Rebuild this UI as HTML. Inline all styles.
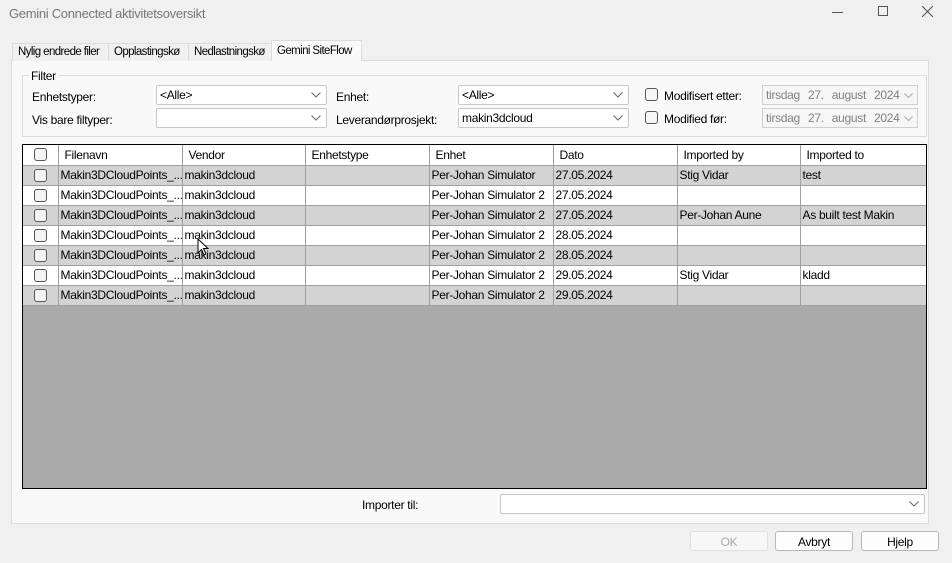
<!DOCTYPE html>
<html><head><meta charset="utf-8"><style>
*{box-sizing:border-box;margin:0;padding:0}
body{width:952px;height:563px;background:#f0f0f0;font-family:"Liberation Sans",sans-serif;font-size:12px;color:#000;position:relative;overflow:hidden;letter-spacing:-0.3px}
.a{position:absolute}
.t{white-space:nowrap}
.tab{position:absolute;top:43px;height:18px;border:1px solid #dcdcdc;border-bottom:none;background:#f0f0f0;padding:2px 0 0 5px;font-size:11.5px;letter-spacing:-0.6px;overflow:hidden}
.combo{position:absolute;height:20px;background:#fff;border:1px solid #c8c8c8;border-radius:2px;padding:2px 0 0 3px}
.combo svg{position:absolute;right:5px;top:6px}
.cb{position:absolute;width:13px;height:13px;border:1px solid #555;border-radius:3px;background:#f6f6f6}
.date{position:absolute;height:20px;border:1px solid #cfcfcf;background:#f6f6f6;color:#808080;padding:2px 0 0 3px;word-spacing:5px}
.date svg{position:absolute;right:4px;top:7px}
.btn{position:absolute;top:531px;height:20px;width:78px;border:1px solid #b8b8b8;border-radius:3px;background:#fdfdfd;text-align:center;padding-top:3px}
table{position:absolute;left:23px;top:145px;border-collapse:collapse;table-layout:fixed;width:903px}
td{height:20px;border:1px solid #a0a0a0;padding:0;text-indent:2px;white-space:nowrap;overflow:hidden;vertical-align:middle}
tr.g td{background:#d3d3d3}
tr.w td{background:#fff}
tr.h td{background:#fff;border-top:none;text-indent:6px}
td.c{position:relative}
td.c span{position:absolute;left:11px;top:3px;width:13px;height:13px;border:1px solid #555;border-radius:3px;background:#f4f4f4}
</style></head><body>
<div class="a t" style="left:9px;top:6px;color:#777;font-size:13px">Gemini Connected aktivitetsoversikt</div>
<div class="a" style="left:832px;top:12px;width:11px;border-top:1px solid #555"></div>
<div class="a" style="left:878px;top:6px;width:10px;height:10px;border:1px solid #555"></div>
<svg class="a" style="left:922px;top:6px" width="11" height="11"><path d="M0 0L11 11M11 0L0 11" stroke="#555" stroke-width="1.1"/></svg>

<div class="a" style="left:11px;top:60px;width:918px;height:464px;background:#f9f9f9;border:1px solid #dcdcdc"></div>
<div class="tab t" style="left:12px;width:97px">Nylig endrede filer</div>
<div class="tab t" style="left:108px;width:81px">Opplastingskø</div>
<div class="tab t" style="left:188px;width:84px">Nedlastningskø</div>
<div class="tab t" style="left:271px;top:40px;height:21px;width:91px;background:#f9f9f9;padding-top:4px">Gemini SiteFlow</div>

<div class="a" style="left:22px;top:75px;width:905px;height:62px;border:1px solid #dcdcdc"></div>
<div class="a t" style="left:29px;top:69px;background:#f9f9f9;padding:0 2px">Filter</div>
<div class="a t" style="left:32px;top:90px">Enhetstyper:</div>
<div class="a t" style="left:32px;top:113px">Vis bare filtyper:</div>
<div class="combo t" style="left:156px;top:85px;width:171px">&lt;Alle&gt;<svg width="10" height="6"><path d="M0.5 0.5L5 5L9.5 0.5" stroke="#666" fill="none"/></svg></div>
<div class="combo t" style="left:156px;top:108px;width:171px"><svg width="10" height="6"><path d="M0.5 0.5L5 5L9.5 0.5" stroke="#666" fill="none"/></svg></div>
<div class="a t" style="left:336px;top:90px">Enhet:</div>
<div class="a t" style="left:336px;top:113px">Leverandørprosjekt:</div>
<div class="combo t" style="left:458px;top:85px;width:171px">&lt;Alle&gt;<svg width="10" height="6"><path d="M0.5 0.5L5 5L9.5 0.5" stroke="#666" fill="none"/></svg></div>
<div class="combo t" style="left:458px;top:108px;width:171px">makin3dcloud<svg width="10" height="6"><path d="M0.5 0.5L5 5L9.5 0.5" stroke="#666" fill="none"/></svg></div>
<div class="cb" style="left:645px;top:88px"></div>
<div class="a t" style="left:664px;top:89px">Modifisert etter:</div>
<div class="cb" style="left:645px;top:111px"></div>
<div class="a t" style="left:664px;top:112px">Modified før:</div>
<div class="date t" style="left:762px;top:85px;width:156px">tirsdag 27. august 2024<svg width="9" height="5"><path d="M0.5 0.5L4.5 4.5L8.5 0.5" stroke="#aaa" fill="none"/></svg></div>
<div class="date t" style="left:762px;top:108px;width:156px">tirsdag 27. august 2024<svg width="9" height="5"><path d="M0.5 0.5L4.5 4.5L8.5 0.5" stroke="#aaa" fill="none"/></svg></div>

<div class="a" style="left:22px;top:144px;width:905px;height:345px;background:#ababab;border:1px solid #000"></div>
<table>
<colgroup><col style="width:35px"><col style="width:124px"><col style="width:123px"><col style="width:124px"><col style="width:124px"><col style="width:124px"><col style="width:123px"><col style="width:126px"></colgroup>
<tr class="h"><td class="c" style="border-left:none"><span></span></td><td>Filenavn</td><td>Vendor</td><td>Enhetstype</td><td>Enhet</td><td>Dato</td><td>Imported by</td><td style="border-right:none">Imported to</td></tr>
<tr class="g"><td class="c" style="border-left:none"><span></span></td><td>Makin3DCloudPoints_...</td><td>makin3dcloud</td><td></td><td>Per-Johan Simulator</td><td>27.05.2024</td><td>Stig Vidar</td><td style="border-right:none">test</td></tr>
<tr class="w"><td class="c" style="border-left:none"><span></span></td><td>Makin3DCloudPoints_...</td><td>makin3dcloud</td><td></td><td>Per-Johan Simulator 2</td><td>27.05.2024</td><td></td><td style="border-right:none"></td></tr>
<tr class="g"><td class="c" style="border-left:none"><span></span></td><td>Makin3DCloudPoints_...</td><td>makin3dcloud</td><td></td><td>Per-Johan Simulator 2</td><td>27.05.2024</td><td>Per-Johan Aune</td><td style="border-right:none">As built test Makin</td></tr>
<tr class="w"><td class="c" style="border-left:none"><span></span></td><td>Makin3DCloudPoints_...</td><td>makin3dcloud</td><td></td><td>Per-Johan Simulator 2</td><td>28.05.2024</td><td></td><td style="border-right:none"></td></tr>
<tr class="g"><td class="c" style="border-left:none"><span></span></td><td>Makin3DCloudPoints_...</td><td>makin3dcloud</td><td></td><td>Per-Johan Simulator 2</td><td>28.05.2024</td><td></td><td style="border-right:none"></td></tr>
<tr class="w"><td class="c" style="border-left:none"><span></span></td><td>Makin3DCloudPoints_...</td><td>makin3dcloud</td><td></td><td>Per-Johan Simulator 2</td><td>29.05.2024</td><td>Stig Vidar</td><td style="border-right:none">kladd</td></tr>
<tr class="g"><td class="c" style="border-left:none"><span></span></td><td>Makin3DCloudPoints_...</td><td>makin3dcloud</td><td></td><td>Per-Johan Simulator 2</td><td>29.05.2024</td><td></td><td style="border-right:none"></td></tr>
</table>
<svg class="a" style="left:197px;top:238px" width="12" height="18"><path d="M1 1L1 15L4.5 11.5L7 17L9 16L6.5 10.5L11 10.5Z" fill="#fff" stroke="#000" stroke-width="1"/></svg>

<div class="a t" style="left:362px;top:498px">Importer til:</div>
<div class="combo" style="left:500px;top:494px;width:425px"><svg width="10" height="6"><path d="M0.5 0.5L5 5L9.5 0.5" stroke="#666" fill="none"/></svg></div>

<div class="btn" style="left:690px;color:#aaa;border-color:#e0e0e0;background:#f7f7f7">OK</div>
<div class="btn" style="left:775px">Avbryt</div>
<div class="btn" style="left:861px">Hjelp</div>
</body></html>
